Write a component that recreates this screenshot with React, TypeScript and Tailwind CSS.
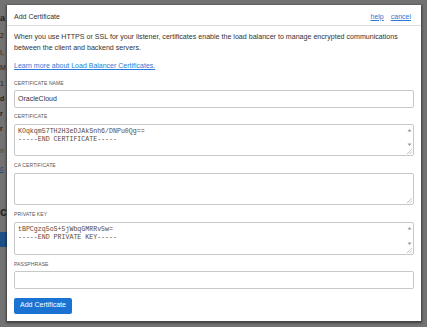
import React from 'react';

const sans = { fontFamily: '"Liberation Sans", Arial, sans-serif' };

function Label({ children }: { children: React.ReactNode }) {
  return <div className="text-[5px] leading-[7px] uppercase text-[#555] tracking-[0.1px]">{children}</div>;
}

function TextBox({ value }: { value?: string }) {
  return (
    <div className="h-[18px] rounded-[2px] border border-[#c8c8c8] bg-white px-[3px] text-[7px] leading-[16px] text-[#333]">
      {value}
    </div>
  );
}

function TextArea({ lines, tall }: { lines?: string[]; tall?: boolean }) {
  return (
    <div className={`relative flex rounded-[2px] border border-[#c8c8c8] bg-white ${tall ? 'h-[33px]' : 'h-[32px]'}`}>
      <div
        className="flex-1 px-[3px] pt-[3px] text-[6.6px] leading-[8px] text-[#5a4a3a]"
        style={{ fontFamily: '"Liberation Mono", "Courier New", monospace' }}
      >
        {lines?.map((l) => (
          <div key={l} className="whitespace-pre">{l}</div>
        ))}
      </div>
      {lines && (
        <div className="flex w-[8px] flex-col items-center justify-between pt-[3px] pb-[8px]">
          <svg width="5" height="4" viewBox="0 0 5 4"><path d="M0.5 3.5 L2.5 1 L4.5 3.5Z" fill="#999" /></svg>
          <svg width="5" height="4" viewBox="0 0 5 4"><path d="M0.5 0.5 L2.5 3 L4.5 0.5Z" fill="#999" /></svg>
        </div>
      )}
      <svg className="absolute bottom-[1px] right-[1px]" width="5" height="5" viewBox="0 0 5 5">
        <path d="M5 0 L0 5 M5 2.5 L2.5 5" stroke="#aaa" strokeWidth="0.7" />
      </svg>
    </div>
  );
}

export default function App() {
  return (
    <div className="relative h-[327px] w-[427px] overflow-hidden bg-[#727272]" style={sans}>
      {/* dimmed page behind the dialog */}
      <div className="absolute left-0 top-0 w-[7px] overflow-hidden text-[#222]">
        <div className="mt-[13px] text-[9px] font-bold leading-[10px]">a</div>
        <div className="mt-[8px] text-[7px] leading-[9px]">2</div>
        <div className="mt-[8px] text-[7px] leading-[9px]">I,</div>
        <div className="mt-[6px] text-[7px] leading-[9px]">M</div>
        <div className="mt-[7px] text-[7px] leading-[9px]">1</div>
        <div className="mt-[6px] text-[7px] font-bold leading-[9px]">d</div>
        <div className="mt-[6px] text-[7px] font-bold leading-[9px]">r</div>
        <div className="mt-[6px] text-[7px] font-bold leading-[9px]">r</div>
        <div className="mt-[13px] text-[7px] leading-[9px] text-[#444]">n</div>
        <div className="mt-[9px] text-[7px] leading-[9px] text-[#1b4a80] underline">c</div>
        <div className="mt-[33px] text-[12px] font-bold leading-[12px]">c</div>
        <div className="mt-[14px] h-[15px] w-[7px] bg-[#1b4f86]" />
      </div>

      <div className="absolute left-[7px] top-[5px] flex h-[316px] w-[414px] flex-col bg-white shadow-[0_1px_2px_1px_rgba(0,0,0,0.45)]">
        <div className="flex h-[21px] items-center justify-between border-b border-[#ddd] pl-[7px] pr-[10px] pt-[4px]">
          <span className="text-[7px] text-[#333]">Add Certificate</span>
          <div className="flex gap-[7px] text-[7px] text-[#2a7ad6] underline">
            <span>help</span>
            <span>cancel</span>
          </div>
        </div>

        <div className="flex flex-col px-[7px] pt-[6px]">
          <p className="text-[7.1px] leading-[11px] text-[#333]">
            When you use HTTPS or SSL for your listener, certificates enable the load balancer to manage encrypted communications between the client and backend servers.
          </p>
          <div className="mt-[6px] text-[7px] leading-[11px] text-[#2a7ad6] underline">
            Learn more about Load Balancer Certificates.
          </div>

          <div className="mt-[9px] mb-[2.5px]"><Label>Certificate Name</Label></div>
          <TextBox value="OracleCloud" />

          <div className="mt-[5px] mb-[4px]"><Label>Certificate</Label></div>
          <TextArea lines={['KOqkqm57TH2H3eDJAkSnh6/DNPu0Qg==', '-----END CERTIFICATE-----']} />

          <div className="mt-[6.5px] mb-[3.5px]"><Label>CA Certificate</Label></div>
          <TextArea />

          <div className="mt-[6.5px] mb-[3.5px]"><Label>Private Key</Label></div>
          <TextArea tall lines={['tBPCgzq5oS+5jWbqGMRRv5w=', '-----END PRIVATE KEY-----']} />

          <div className="mt-[6.5px] mb-[2.5px]"><Label>Passphrase</Label></div>
          <TextBox />

          <button className="mt-[9px] h-[16px] w-[58px] rounded-[2px] bg-[#1a73d2] text-[7px] text-white">
            Add Certificate
          </button>
        </div>
      </div>
    </div>
  );
}
